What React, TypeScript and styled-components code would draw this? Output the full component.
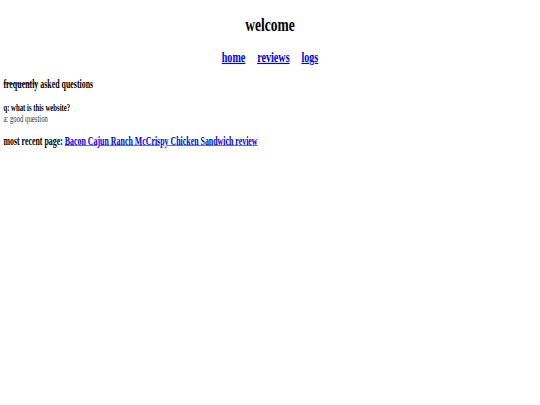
import styled, { createGlobalStyle } from 'styled-components';

const GlobalStyle = createGlobalStyle`
  html, body {
    margin: 0;
    padding: 0;
    background: #ffffff;
    overflow: hidden;
  }
`;

const Sheet = styled.div`
  width: 1280px;
  padding: 21.44px 8px 0;
  box-sizing: border-box;
  transform: scale(0.4219, 0.61);
  transform-origin: 0 0;
  font-family: 'Liberation Serif', 'Times New Roman', serif;
  font-size: 16px;
  color: #000000;
`;

const Title = styled.h1`
  margin: 0 0 21.44px;
  font-size: 32px;
  font-weight: bold;
  text-align: center;
`;

const Nav = styled.h2`
  display: flex;
  justify-content: center;
  gap: 28px;
  margin: 0 0 19.92px;
  font-size: 24px;
  font-weight: bold;
`;

const NavLink = styled.a`
  color: #0000ee;
  text-decoration: underline;
`;

const SectionTitle = styled.h3<{ $gap?: number }>`
  margin: 0 0 ${(p) => p.$gap ?? 18.72}px;
  font-size: 18.72px;
  font-weight: bold;
`;

const Faq = styled.div`
  margin: 0 0 16px;
  line-height: normal;
`;

const Question = styled.div`
  font-weight: bold;
`;

const Answer = styled.div`
  color: #3a3a3a;
`;

const Link = styled.a`
  color: #0000ee;
  text-decoration: underline;
`;

export default function App() {
  return (
    <>
      <GlobalStyle />
      <Sheet>
        <Title>welcome</Title>
        <Nav>
          <NavLink href="#">home</NavLink>
          <NavLink href="#">reviews</NavLink>
          <NavLink href="#">logs</NavLink>
        </Nav>
        <SectionTitle>
          <s>frequently</s> asked questions
        </SectionTitle>
        <Faq>
          <Question>q: what is this website?</Question>
          <Answer>a: good question</Answer>
        </Faq>
        <SectionTitle $gap={0}>
          most recent page:{' '}
          <Link href="#">Bacon Cajun Ranch McCrispy Chicken Sandwich review</Link>
        </SectionTitle>
      </Sheet>
    </>
  );
}
